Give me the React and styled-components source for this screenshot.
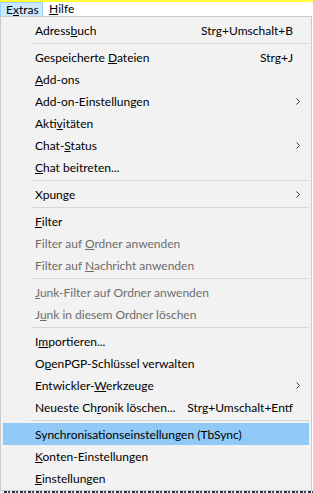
import React from "react";
import styled, { createGlobalStyle } from "styled-components";

const GlobalStyle = createGlobalStyle`
  html, body { margin: 0; padding: 0; background: #ffffff; }
  body { font-family: Lato, "Noto Sans", sans-serif; font-size: 12px; color: #000; }
  #root { width: 313px; height: 493px; overflow: hidden; }
`;

const Screen = styled.div`
  width: 313px;
  height: 493px;
  display: flex;
  flex-direction: column;
  overflow: hidden;
  & > * { flex-shrink: 0; }
`;

const TopStripe = styled.div`
  height: 2px;
  background: #ffff3c;
`;

const MenuBar = styled.div`
  height: 14px;
  display: flex;
  align-items: stretch;
  background: #ffffff;
`;

const BarItem = styled.div`
  box-sizing: border-box;
  padding: 0 ${(p) => (p.$active ? "5px" : "6px")};
  width: ${(p) => (p.$active ? "43px" : "auto")};
  display: flex;
  align-items: center;
  line-height: 14px;
  background: ${(p) => (p.$active ? "#cce8ff" : "transparent")};
  border: ${(p) => (p.$active ? "1px solid #99d1ff" : "none")};
  border-bottom: none;
`;

const Menu = styled.div`
  box-sizing: border-box;
  width: 312px;
  border: 1px solid #cccccc;
  background: #f2f2f2;
  padding: 2px 2px 1px 2px;
  display: flex;
  flex-direction: column;
  & > * { flex-shrink: 0; }
`;

const Item = styled.div`
  height: 22px;
  display: flex;
  align-items: center;
  padding-left: 32px;
  padding-right: 9px;
  background: ${(p) => (p.$hl ? "#91c9f7" : "transparent")};
  color: ${(p) => (p.$disabled ? "#6d6d6d" : "#000")};
  white-space: nowrap;
`;

const Label = styled.span`
  flex: 1;
  u { text-decoration-thickness: 1px; text-underline-offset: 1px; }
`;

const Shortcut = styled.span`
  margin-left: 10px;
`;

const ArrowBox = styled.span`
  width: 7px;
  display: flex;
  justify-content: flex-end;
  align-items: center;
`;

const Separator = styled.div`
  height: 5px;
  display: flex;
  align-items: center;
  padding-left: 28px;
  &::after {
    content: "";
    flex: 1;
    height: 1px;
    background: #d7d7d7;
  }
`;

const Behind = styled.div`
  flex: 1 1 auto;
  background: #f4f4f4;
  display: flex;
  flex-direction: column;
  justify-content: flex-end;
`;

const BehindEdge = styled.div`
  height: 2px;
  margin-left: 4px;
  background: repeating-linear-gradient(
    90deg,
    #2a2f4a 0 3px,
    #f4f4f4 3px 4px,
    #3a3f5a 4px 6px,
    #f4f4f4 6px 8px
  );
`;

const Arrow = () => (
  <svg width="4" height="7" viewBox="0 0 4 7">
    <path d="M0.5 0.5 L3.5 3.5 L0.5 6.5" fill="none" stroke="#333" strokeWidth="1" />
  </svg>
);

const M = ({ text, k }) => {
  if (k === undefined || k < 0) return text;
  return (
    <>
      {text.slice(0, k)}
      <u>{text[k]}</u>
      {text.slice(k + 1)}
    </>
  );
};

const menu = [
  { t: "Adressbuch", k: 6, s: "Strg+Umschalt+B" },
  "sep",
  { t: "Gespeicherte Dateien", k: 13, s: "Strg+J" },
  { t: "Add-ons", k: 0 },
  { t: "Add-on-Einstellungen", k: -1, sub: true },
  { t: "Aktivitäten", k: 4 },
  { t: "Chat-Status", k: 5, sub: true },
  { t: "Chat beitreten...", k: 0 },
  "sep",
  { t: "Xpunge", k: -1, sub: true },
  "sep",
  { t: "Filter", k: 0 },
  { t: "Filter auf Ordner anwenden", k: 11, d: true },
  { t: "Filter auf Nachricht anwenden", k: 11, d: true },
  "sep",
  { t: "Junk-Filter auf Ordner anwenden", k: 0, d: true },
  { t: "Junk in diesem Ordner löschen", k: 1, d: true },
  "sep",
  { t: "Importieren...", k: 1 },
  { t: "OpenPGP-Schlüssel verwalten", k: 1 },
  { t: "Entwickler-Werkzeuge", k: 11, sub: true },
  { t: "Neueste Chronik löschen...", k: 10, s: "Strg+Umschalt+Entf" },
  "sep",
  { t: "Synchronisationseinstellungen (TbSync)", k: -1, hl: true },
  { t: "Konten-Einstellungen", k: 0 },
  { t: "Einstellungen", k: 0 },
];

export default function App() {
  return (
    <Screen>
      <GlobalStyle />
      <TopStripe />
      <MenuBar>
        <BarItem $active>
          <M text="Extras" k={1} />
        </BarItem>
        <BarItem>
          <M text="Hilfe" k={0} />
        </BarItem>
      </MenuBar>
      <Menu>
        {menu.map((m, i) =>
          m === "sep" ? (
            <Separator key={i} />
          ) : (
            <Item key={i} $disabled={m.d} $hl={m.hl}>
              <Label>
                <M text={m.t} k={m.k} />
              </Label>
              {m.s && <Shortcut>{m.s}</Shortcut>}
              <ArrowBox>{m.sub && <Arrow />}</ArrowBox>
            </Item>
          )
        )}
      </Menu>
      <Behind>
        <BehindEdge />
      </Behind>
    </Screen>
  );
}
